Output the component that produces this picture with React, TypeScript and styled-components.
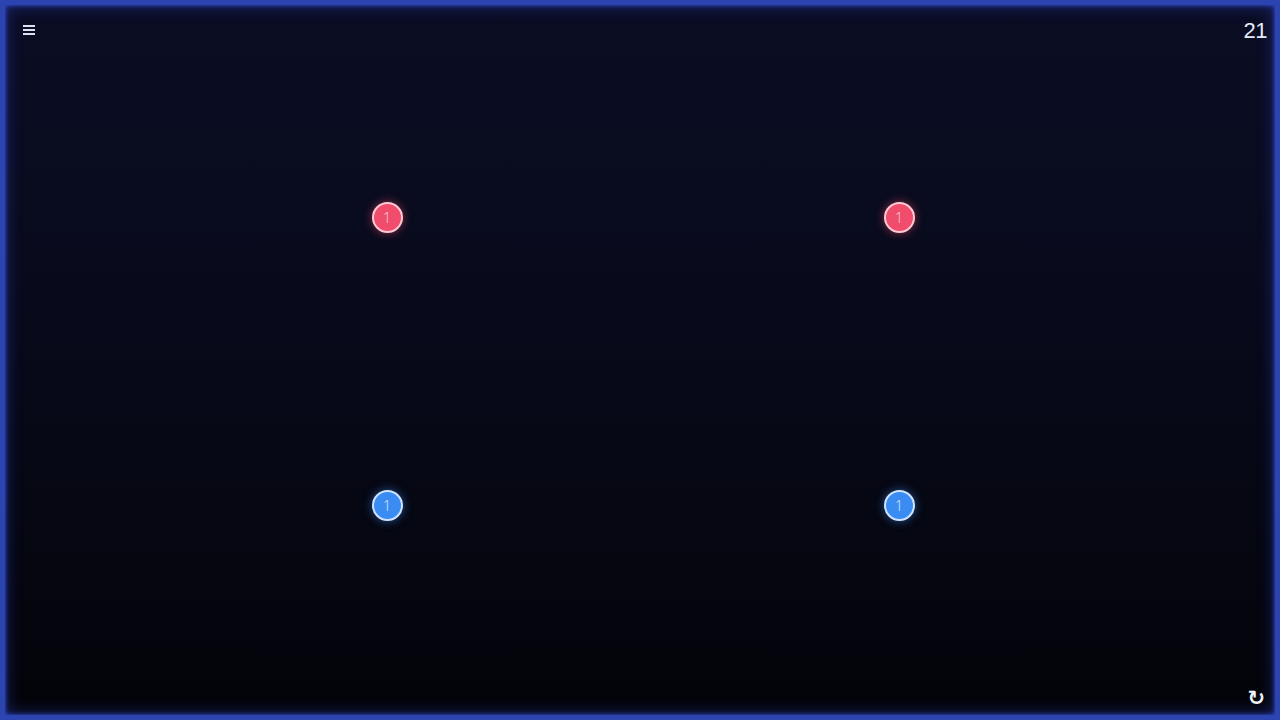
import styled, { createGlobalStyle } from "styled-components";

const GlobalStyle = createGlobalStyle`
  html, body {
    margin: 0;
    padding: 0;
    background: #03040a;
  }
  * { box-sizing: border-box; }
`;

type Dot = { x: number; y: number; value: number; team: "red" | "blue" };

const dots: Dot[] = [
  { x: 387, y: 217, value: 1, team: "red" },
  { x: 899, y: 217, value: 1, team: "red" },
  { x: 387, y: 505, value: 1, team: "blue" },
  { x: 899, y: 505, value: 1, team: "blue" },
];

const teamColors = {
  red: { fill: "#f04d6c", ring: "#ffc9d3", glow: "rgba(240, 77, 108, 0.55)", text: "#ffd8df" },
  blue: { fill: "#3b8cf2", ring: "#cfe3ff", glow: "rgba(59, 140, 242, 0.55)", text: "#e0edff" },
};

const Board = styled.div`
  position: relative;
  width: 1280px;
  height: 720px;
  overflow: hidden;
  border: 5px solid #2b44b0;
  background: linear-gradient(180deg, #0b0d24 0%, #080a1b 45%, #030409 100%);
  box-shadow:
    inset 0 0 4px rgba(60, 90, 235, 0.9),
    inset 0 0 16px rgba(45, 70, 215, 0.55);
  font-family: "Liberation Sans", "Open Sans", sans-serif;
`;

const TopBar = styled.div`
  display: flex;
  justify-content: space-between;
  align-items: flex-start;
  padding: 14px 8px 0 18px;
`;

const MenuButton = styled.button`
  background: none;
  border: none;
  padding: 0;
  margin-top: 6px;
  display: flex;
  flex-direction: column;
  gap: 2px;
  cursor: pointer;
`;

const MenuLine = styled.span`
  display: block;
  width: 12px;
  height: 2px;
  background: #dbe1f2;
`;

const Score = styled.div`
  margin-top: -3px;
  color: #e4eaf8;
  font-size: 22px;
  font-weight: 400;
  letter-spacing: -0.5px;
  line-height: 30px;
`;

const ResetButton = styled.button`
  position: absolute;
  right: 10px;
  bottom: 6px;
  background: none;
  border: none;
  padding: 0;
  color: #eef2fb;
  font-size: 21px;
  font-weight: 700;
  line-height: 1;
  font-family: "DejaVu Sans", sans-serif;
  cursor: pointer;
`;

const Node = styled.div<{ $team: "red" | "blue" }>`
  position: absolute;
  width: 31px;
  height: 31px;
  margin: -15.5px 0 0 -15.5px;
  border-radius: 50%;
  display: flex;
  align-items: center;
  justify-content: center;
  background: ${(p) => teamColors[p.$team].fill};
  border: 2px solid ${(p) => teamColors[p.$team].ring};
  box-shadow: 0 0 10px ${(p) => teamColors[p.$team].glow};
  color: ${(p) => teamColors[p.$team].text};
  font-family: "Open Sans", sans-serif;
  font-size: 14px;
  font-weight: 300;
`;

export default function App() {
  return (
    <>
      <GlobalStyle />
      <Board>
        <TopBar>
          <MenuButton aria-label="menu">
            <MenuLine />
            <MenuLine />
            <MenuLine />
          </MenuButton>
          <Score>21</Score>
        </TopBar>
        {dots.map((d, i) => (
          <Node key={i} $team={d.team} style={{ left: d.x - 5, top: d.y - 5 }}>
            {d.value}
          </Node>
        ))}
        <ResetButton aria-label="reset">↻</ResetButton>
      </Board>
    </>
  );
}
